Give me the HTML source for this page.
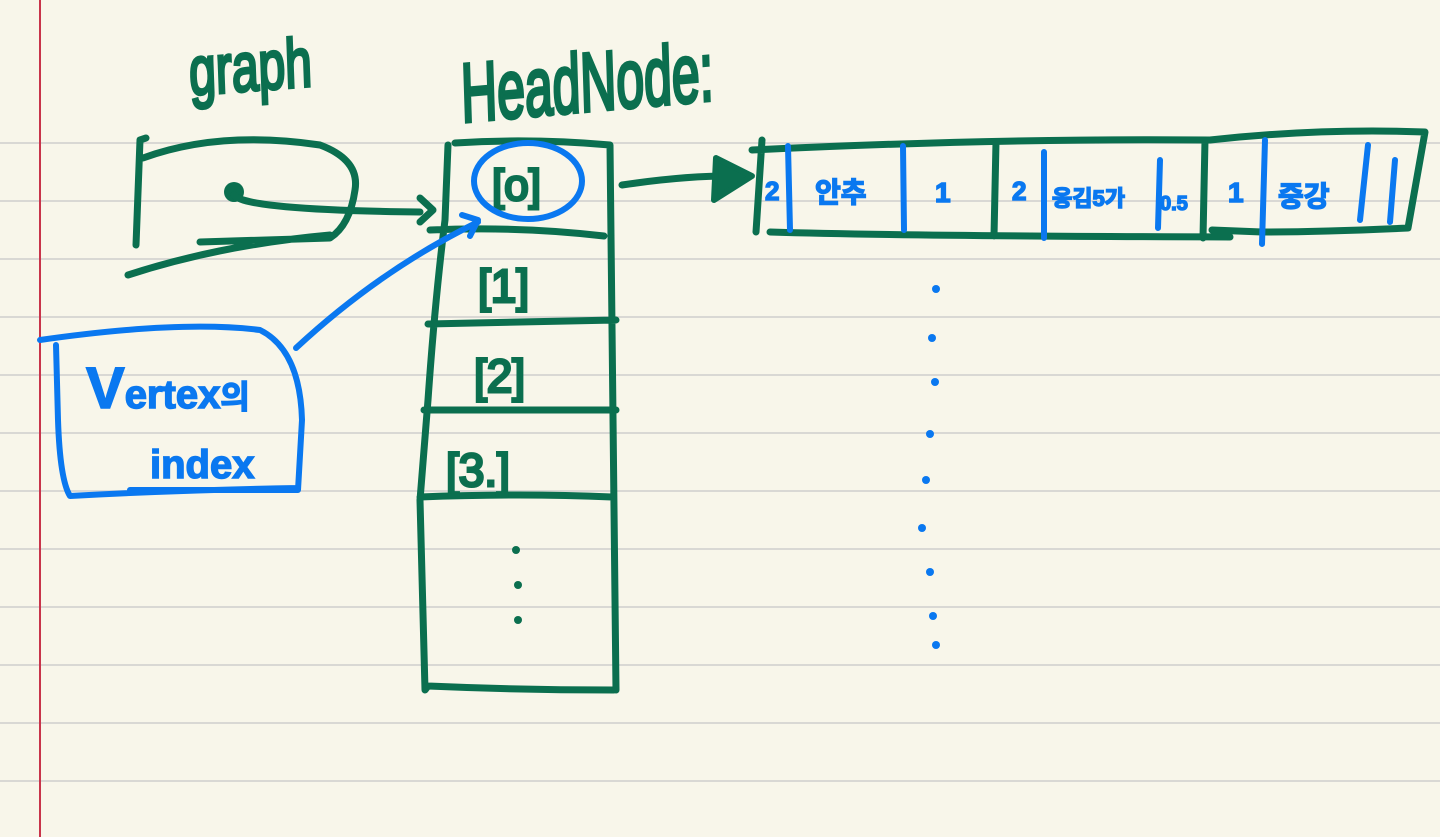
<!DOCTYPE html>
<html><head><meta charset="utf-8"><style>
html,body{margin:0;padding:0;background:#f8f6ea;width:1440px;height:837px;overflow:hidden}
svg{display:block}
.g{fill:none;stroke:#0b6f4f;stroke-width:7;stroke-linecap:round;stroke-linejoin:round}
.b{fill:none;stroke:#0a78f0;stroke-width:6;stroke-linecap:round;stroke-linejoin:round}
.tg{fill:#0b6f4f;stroke:#0b6f4f;stroke-width:3;font-family:"Liberation Sans",sans-serif}
.tb{fill:#0a78f0;stroke:#0a78f0;stroke-width:1.5;font-family:"Liberation Sans","Noto Sans CJK KR",sans-serif;font-weight:bold}
</style></head><body>
<svg width="1440" height="837" viewBox="0 0 1440 837">
<g stroke="#d9d8d4" stroke-width="2">
<line x1="0" y1="143" x2="1440" y2="143"/><line x1="0" y1="201" x2="1440" y2="201"/>
<line x1="0" y1="259" x2="1440" y2="259"/><line x1="0" y1="317" x2="1440" y2="317"/>
<line x1="0" y1="375" x2="1440" y2="375"/><line x1="0" y1="433" x2="1440" y2="433"/>
<line x1="0" y1="491" x2="1440" y2="491"/><line x1="0" y1="549" x2="1440" y2="549"/>
<line x1="0" y1="607" x2="1440" y2="607"/><line x1="0" y1="665" x2="1440" y2="665"/>
<line x1="0" y1="723" x2="1440" y2="723"/><line x1="0" y1="781" x2="1440" y2="781"/>
</g>
<line x1="40" y1="0" x2="40" y2="837" stroke="#c8344a" stroke-width="2"/>

<!-- graph box -->
<text x="0" y="0" class="tg" font-size="60" transform="translate(190 95) scale(0.8 1.15) rotate(-3)">graph</text>
<path class="g" d="M146 138 L140 140 L136 245 M143 158 Q220 130 320 145 Q360 160 355 190 Q350 225 330 238 Q260 240 200 242 M128 275 Q220 245 330 235"/>
<circle cx="234" cy="192" r="10" fill="#0b6f4f"/>
<path class="g" d="M234 195 Q245 210 420 212 M420 198 L433 210 L420 222"/>

<!-- HeadNode -->
<text x="0" y="0" class="tg" font-size="64" transform="translate(462 122) scale(0.78 1.3) rotate(-3)">HeadNode:</text>
<path class="g" d="M455 143 Q530 138 610 145 L616 690 M448 145 L445 220 Q435 300 428 400 L420 500 L425 690 L428 686 Q520 690 614 690 M430 230 Q520 226 604 236 M428 324 L616 320 M424 410 L616 410 M420 497 Q520 493 612 497"/>
<text x="492" y="200" class="tg" font-size="44">[o]</text>
<text x="478" y="302" class="tg" font-size="46">[1]</text>
<text x="474" y="392" class="tg" font-size="46">[2]</text>
<text x="446" y="486" class="tg" font-size="46">[3.]</text>
<g fill="#0b6f4f"><circle cx="516" cy="550" r="4"/><circle cx="518" cy="585" r="4"/><circle cx="518" cy="620" r="4"/></g>

<!-- arrow to list -->
<path class="g" d="M622 185 Q690 175 740 176"/>
<path d="M716 158 L752 176 L714 200 Z" fill="#0b6f4f" stroke="#0b6f4f" stroke-width="6" stroke-linejoin="round"/>
<path class="g" d="M762 140 L756 232 M752 150 Q1000 138 1210 140 Q1320 128 1425 132 L1408 228 Q1320 232 1262 232 L1212 230 M770 232 Q900 236 1230 237 M996 142 L994 236 M1205 140 L1203 238"/>
<text x="765" y="200" class="tb" font-size="26">2</text>
<text x="815" y="202" class="tb" font-size="28">안추</text>
<text x="935" y="202" class="tb" font-size="28">1</text>
<text x="1012" y="200" class="tb" font-size="26">2</text>
<text x="1052" y="206" class="tb" font-size="22">옹김5가</text>
<text x="1160" y="210" class="tb" font-size="20">0.5</text>
<text x="1228" y="202" class="tb" font-size="28">1</text>
<text x="1278" y="206" class="tb" font-size="28">중강</text>
<path class="b" d="M788 146 L790 230 M903 146 L904 230 M1044 152 L1044 238 M1160 160 L1158 228 M1265 140 L1262 244 M1368 145 L1360 220 M1395 160 L1390 222"/>
<g fill="#0a78f0"><circle cx="936" cy="289" r="4"/><circle cx="932" cy="338" r="4"/><circle cx="935" cy="382" r="4"/><circle cx="930" cy="434" r="4"/><circle cx="926" cy="480" r="4"/><circle cx="922" cy="528" r="4"/><circle cx="930" cy="572" r="4"/><circle cx="933" cy="616" r="4"/><circle cx="936" cy="645" r="4"/></g>

<!-- blue circle and vertex label -->
<ellipse cx="528" cy="181" rx="54" ry="38" class="b"/>
<path class="b" d="M296 348 Q380 270 478 222 M462 215 L478 220 L470 236"/>
<path class="b" d="M40 340 Q180 320 260 330 Q300 350 302 420 L298 490 L130 490 M56 345 L58 420 Q60 480 70 496 Q180 490 298 488"/>
<text x="86" y="408" class="tb" font-size="58" font-weight="normal">V<tspan font-size="40">ertex</tspan><tspan font-size="32">의</tspan></text>
<text x="150" y="478" class="tb" font-size="40" font-weight="normal">index</text>
</svg>
</body></html>
